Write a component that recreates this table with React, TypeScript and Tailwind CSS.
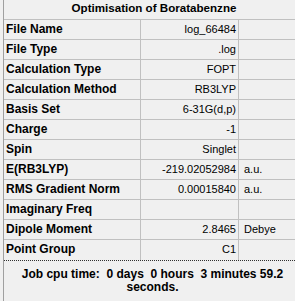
import React from "react";

type Row = { label: string; value: string; unit?: string };

const rows: Row[] = [
  { label: "File Name", value: "log_66484" },
  { label: "File Type", value: ".log" },
  { label: "Calculation Type", value: "FOPT" },
  { label: "Calculation Method", value: "RB3LYP" },
  { label: "Basis Set", value: "6-31G(d,p)" },
  { label: "Charge", value: "-1" },
  { label: "Spin", value: "Singlet" },
  { label: "E(RB3LYP)", value: "-219.02052984", unit: "a.u." },
  { label: "RMS Gradient Norm", value: "0.00015840", unit: "a.u." },
  { label: "Imaginary Freq", value: "" },
  { label: "Dipole Moment", value: "2.8465", unit: "Debye" },
  { label: "Point Group", value: "C1" },
];

export default function App() {
  return (
    <div
      className="w-[295px] h-[301px] overflow-hidden bg-[#f0f0f0] pl-[3px] text-black"
      style={{ fontFamily: '"Liberation Sans", Arial, sans-serif' }}
    >
      <div className="h-full border-l border-[#a0a0a0] flex flex-col">
        <div className="h-[20px] border-b border-[#c0c0c0] pl-[9px] text-center text-[11.6px] font-bold leading-[15px]">
          Optimisation of Boratabenzne
        </div>
        {rows.map((r, i) => (
          <div
            key={r.label}
            className={
              i === rows.length - 1
                ? "flex h-[20px]"
                : "flex h-[20px] border-b border-[#c0c0c0]"
            }
          >
            <div className="w-[137px] shrink-0 border-r border-[#c0c0c0] pl-[2px] text-[12px] font-bold leading-[19px] whitespace-nowrap">
              {r.label}
            </div>
            <div className="w-[98px] shrink-0 border-r border-[#c0c0c0] pr-[2px] text-right text-[11px] leading-[19px] whitespace-nowrap">
              {r.value}
            </div>
            <div className="flex-1 pl-[5px] text-[11px] leading-[19px] whitespace-nowrap">
              {r.unit ?? ""}
            </div>
          </div>
        ))}
        <div className="flex-1 border-t border-dotted border-[#303030] pl-[6px] pt-[7px] text-center text-[12px] font-bold leading-[13px] whitespace-pre-wrap">
          {"Job cpu time:  0 days  0 hours  3 minutes 59.2 seconds."}
        </div>
      </div>
    </div>
  );
}
